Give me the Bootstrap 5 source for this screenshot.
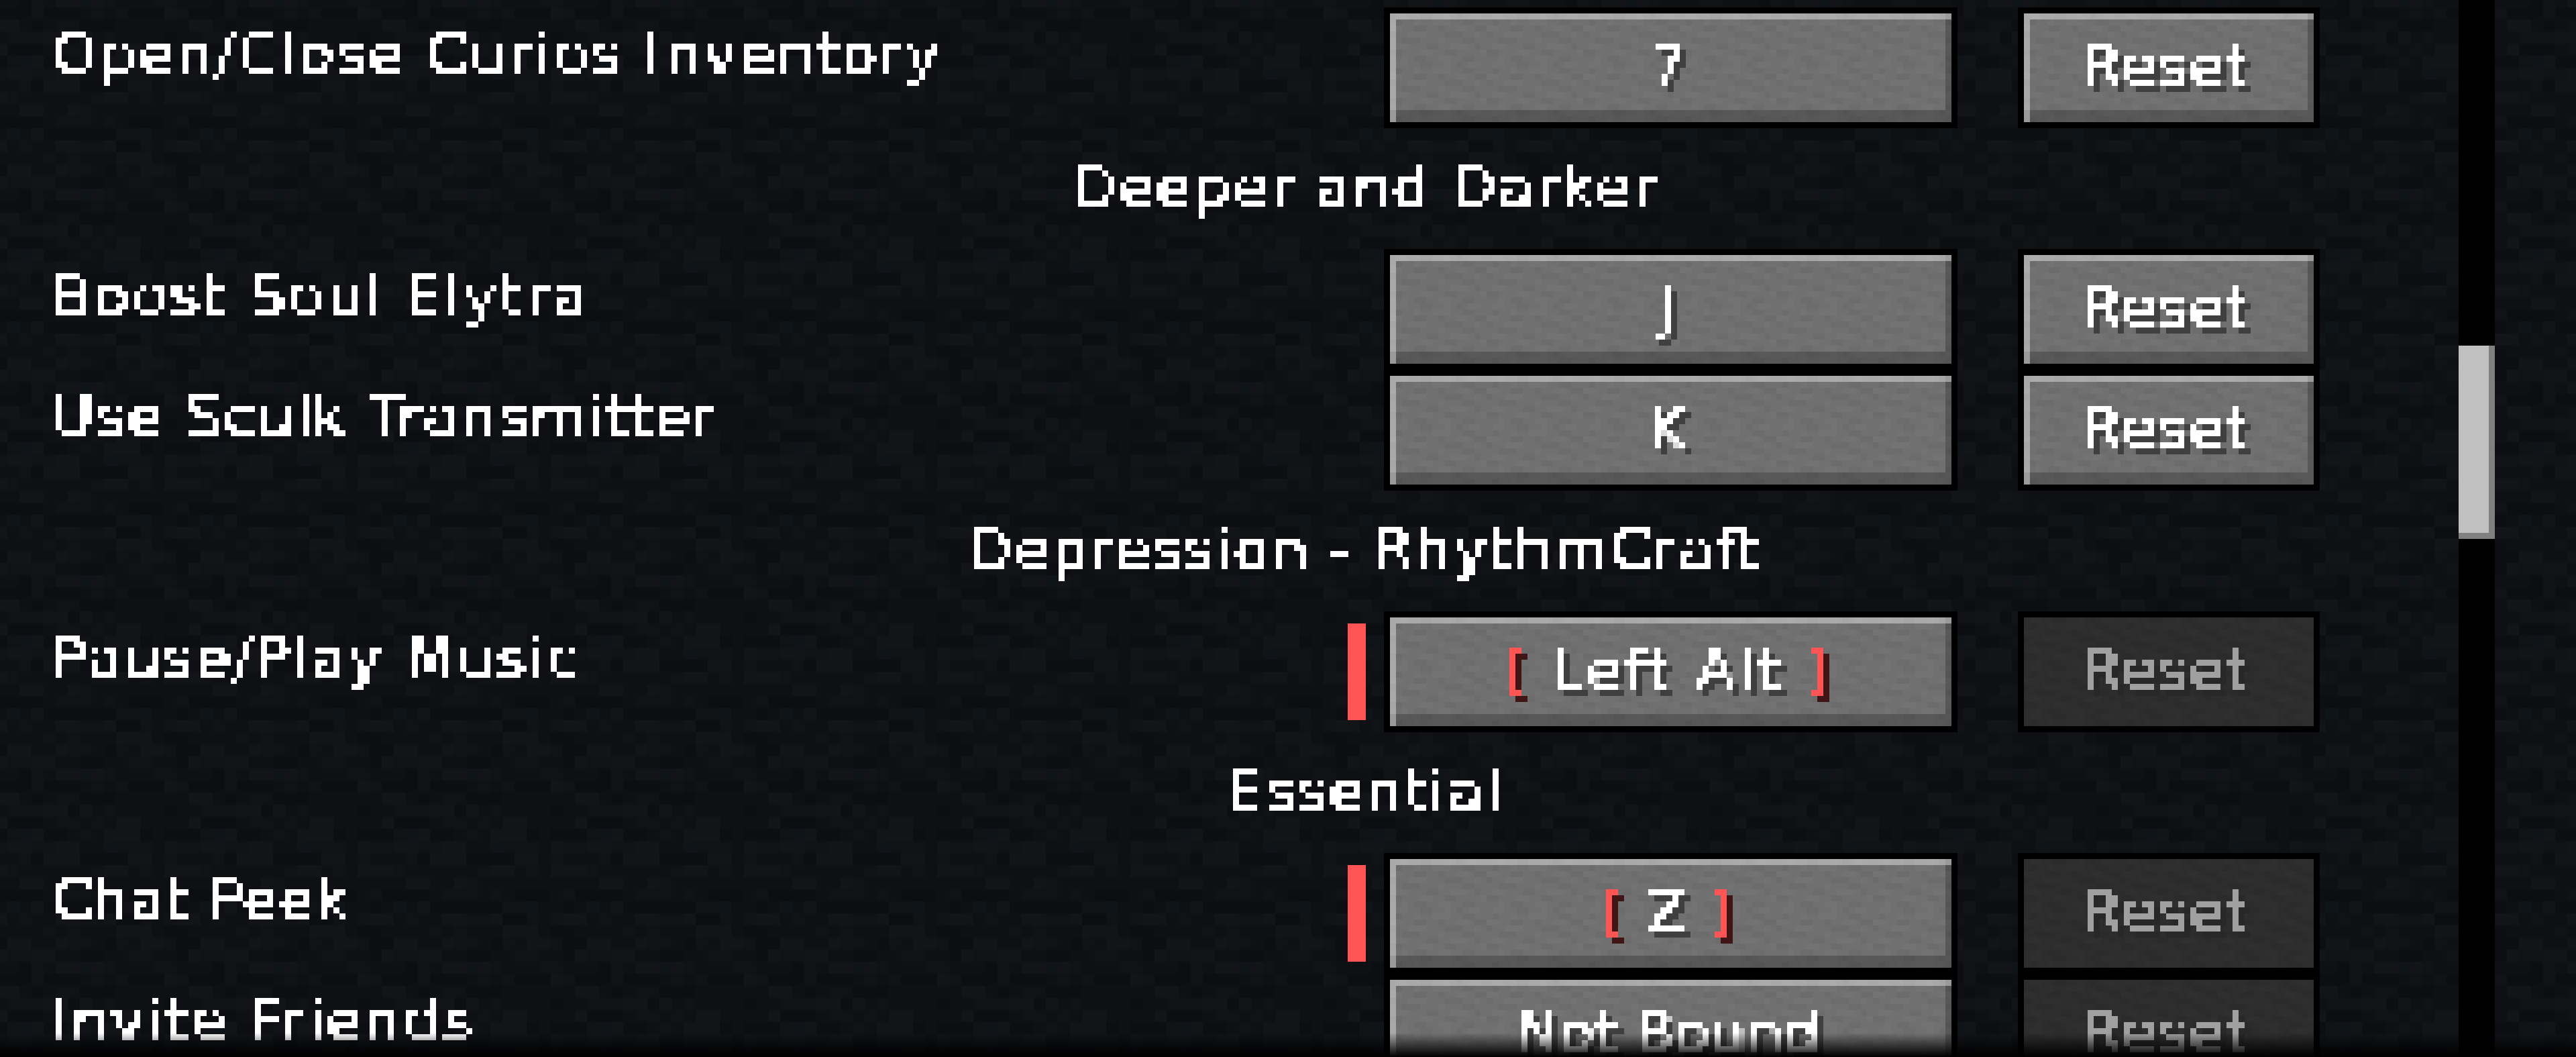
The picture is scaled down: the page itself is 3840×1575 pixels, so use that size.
<!doctype html>
<html lang="en">
<head>
<meta charset="utf-8">
<title>Key Binds</title>
<link href="https://cdn.jsdelivr.net/npm/bootstrap@5.3.0/dist/css/bootstrap.min.css" rel="stylesheet">
<style>
html,body{height:100%}
body{margin:0;overflow:hidden;color:#fff;background-color:#0e1014;
  background-image:url("data:image/svg+xml,%3Csvg xmlns='http://www.w3.org/2000/svg' width='288' height='288' viewBox='0 0 16 16' shape-rendering='crispEdges' fill='none'%3E%3Cpath stroke='%23121418' d='M1 .5h2M7 .5h2M11 .5h1M12 1.5h3M3 2.5h2M7 2.5h1M14 2.5h2M2 3.5h1M5 3.5h2M7 4.5h2M10 4.5h1M0 5.5h1M2 6.5h2M6 7.5h2M9 7.5h1M2 8.5h1M12 8.5h2M5 9.5h1M11 9.5h3M0 10.5h1M3 10.5h2M7 10.5h2M6 11.5h3M13 11.5h2M0 12.5h3M11 12.5h2M4 13.5h2M8 13.5h1M5 15.5h1'/%3E%3Cpath stroke='%23101216' d='M0 .5h1M4 .5h1M9 .5h2M14 .5h1M6 1.5h1M8 1.5h1M0 2.5h1M8 2.5h2M12 2.5h1M3 3.5h2M13 3.5h2M0 4.5h1M5 4.5h1M11 4.5h1M15 4.5h1M1 5.5h1M5 5.5h1M10 5.5h1M12 5.5h1M7 6.5h2M3 7.5h3M11 7.5h1M7 8.5h2M10 8.5h1M3 9.5h1M9 9.5h1M1 10.5h2M5 10.5h2M12 10.5h3M0 11.5h1M4 11.5h1M3 12.5h1M10 12.5h1M14 12.5h1M9 13.5h1M1 14.5h1M7 14.5h3M11 14.5h1M12 15.5h2'/%3E%3Cpath stroke='%230c0e12' d='M12 .5h2M0 1.5h2M1 2.5h2M11 2.5h1M1 3.5h1M9 3.5h2M4 4.5h1M2 5.5h3M6 5.5h3M13 5.5h3M5 6.5h1M9 6.5h3M0 7.5h1M8 7.5h1M3 8.5h3M0 9.5h3M6 9.5h2M14 9.5h1M5 11.5h1M9 11.5h4M2 14.5h4M13 14.5h3M1 15.5h1M6 15.5h6'/%3E%3Cpath stroke='%230f1418' d='M9 4.5h1M4 9.5h1M11 10.5h1M3 15.5h1M14 15.5h1'/%3E%3C/svg%3E");
  background-position:245px 209px;background-size:288px 288px;
  font-family:"DejaVu Sans",sans-serif}
.kb-screen{height:1575px}
.kb-list{width:3665px;padding-top:11px;flex:0 0 3665px}
.kb-row{height:180px}
.kb-label{flex:0 0 2009px;padding:36px 0 0 74px}
.kb-label .kb-text{padding-left:3px}
.kb-mark{flex:0 0 27px;height:144px;margin:18px 27px 0 0;background:#f55}
.kb-mark-off{visibility:hidden}
.btn.kb-btn,.btn.kb-btn:disabled{flex:0 0 855px;height:180px;border:9px solid #000;border-radius:0;padding:45px 0 0;
  display:flex;justify-content:center;align-items:flex-start;color:#fff;opacity:1;font:inherit;
  background-color:#707070;
  background-image:url("data:image/svg+xml,%3Csvg xmlns='http://www.w3.org/2000/svg' width='144' height='72' viewBox='0 0 16 8' shape-rendering='crispEdges' fill='none'%3E%3Cpath stroke='%23fff' stroke-opacity='.025' d='M1 .5h2M9 .5h1M13 .5h2M4 1.5h1M7 1.5h3M0 2.5h2M11 2.5h2M3 3.5h3M14 3.5h1M8 4.5h1M1 5.5h2M10 5.5h3M5 6.5h2M15 6.5h1M2 7.5h1M8 7.5h2'/%3E%3Cpath stroke='%23000' stroke-opacity='.035' d='M5 .5h2M11 .5h1M1 1.5h1M12 1.5h2M4 2.5h2M8 2.5h1M14 2.5h2M0 3.5h1M9 3.5h3M2 4.5h3M12 4.5h2M6 5.5h2M14 5.5h1M0 6.5h2M9 6.5h2M4 7.5h2M12 7.5h2'/%3E%3C/svg%3E");
  box-shadow:inset 9px 9px 0 rgba(255,255,255,.4),inset -9px -18px 0 rgba(0,0,0,.22)}
.btn.kb-btn:disabled{background-color:#2d2d2d;
  background-image:url("data:image/svg+xml,%3Csvg xmlns='http://www.w3.org/2000/svg' width='144' height='72' viewBox='0 0 16 8' shape-rendering='crispEdges' fill='none'%3E%3Cpath stroke='%23fff' stroke-opacity='.012' d='M1 .5h2M9 .5h1M13 .5h2M4 1.5h1M7 1.5h3M0 2.5h2M11 2.5h2M3 3.5h3M14 3.5h1M8 4.5h1M1 5.5h2M10 5.5h3M5 6.5h2M15 6.5h1M2 7.5h1M8 7.5h2'/%3E%3Cpath stroke='%23000' stroke-opacity='.05' d='M5 .5h2M11 .5h1M1 1.5h1M12 1.5h2M4 2.5h2M8 2.5h1M14 2.5h2M0 3.5h1M9 3.5h3M2 4.5h3M12 4.5h2M6 5.5h2M14 5.5h1M0 6.5h2M9 6.5h2M4 7.5h2M12 7.5h2'/%3E%3C/svg%3E");
  box-shadow:none;color:#a0a0a0}
.btn.kb-btn.kb-reset{flex:0 0 450px;margin-left:90px}
.kb-cat{height:180px;padding:54px 0 0 413px;text-align:center}
.kb-text{display:inline-block;font-size:86px;line-height:67px;padding:0 9px 27px 0;white-space:pre;color:inherit;filter:url(#kbPixel)}
.kb-shadow{text-shadow:9px 9px 0 #3f3f3f}
.kb-reset:disabled .kb-shadow{text-shadow:9px 9px 0 #282828}
.kb-red{color:#f55;text-shadow:9px 9px 0 #3f1515}
.trk-00{letter-spacing:0}
.trk-13{letter-spacing:1.3px}
.trk-20{letter-spacing:2px}
.trk-27{letter-spacing:2.7px}
.trk-29{letter-spacing:2.9px}
.trk-31{letter-spacing:3.1px}
.trk-35{letter-spacing:3.5px}
.trk-36{letter-spacing:3.6px}
.trk-38{letter-spacing:3.8px}
.trk-40{letter-spacing:4px}
.trk-42{letter-spacing:4.2px}
.trk-52{letter-spacing:5.2px}
.kb-track{flex:0 0 54px;height:1575px;background:#000}
.kb-thumb{margin-top:515px;height:288px;background:#c0c0c0;box-shadow:inset -9px -9px 0 #808080}
.kb-fade{left:0;right:0;bottom:0;height:36px;background:linear-gradient(rgba(0,0,0,0),#000);pointer-events:none}
.kb-defs{width:0;height:0}
</style>
</head>
<body>
<svg class="kb-defs position-absolute" aria-hidden="true">
  <filter id="kbPixel" x="0" y="0" width="100%" height="100%" color-interpolation-filters="sRGB">
    <feMorphology in="SourceGraphic" operator="dilate" radius="1 1" result="fat"/>
    <feFlood x="4" y="4" width="1" height="1" flood-color="#000"/>
    <feComposite width="9" height="9"/>
    <feTile result="grid"/>
    <feComposite in="fat" in2="grid" operator="in"/>
    <feComponentTransfer><feFuncA type="discrete" tableValues="0 0 0 1"/></feComponentTransfer>
    <feMorphology operator="dilate" radius="4"/>
  </filter>
</svg>
<main class="kb-screen d-flex position-relative">
  <div class="kb-list">
    <div class="kb-row d-flex">
      <div class="kb-label"><span class="kb-text trk-36">Open/Close Curios Inventory</span></div>
      <div class="kb-mark kb-mark-off"></div>
      <button class="btn kb-btn" type="button"><span class="kb-text kb-shadow">7</span></button>
      <button class="btn kb-btn kb-reset" type="button"><span class="kb-text kb-shadow trk-20">Reset</span></button>
    </div>
    <div class="kb-cat"><span class="kb-text trk-31">Deeper and Darker</span></div>
    <div class="kb-row d-flex">
      <div class="kb-label"><span class="kb-text trk-40">Boost Soul Elytra</span></div>
      <div class="kb-mark kb-mark-off"></div>
      <button class="btn kb-btn" type="button"><span class="kb-text kb-shadow">J</span></button>
      <button class="btn kb-btn kb-reset" type="button"><span class="kb-text kb-shadow trk-20">Reset</span></button>
    </div>
    <div class="kb-row d-flex">
      <div class="kb-label"><span class="kb-text trk-27">Use Sculk Transmitter</span></div>
      <div class="kb-mark kb-mark-off"></div>
      <button class="btn kb-btn" type="button"><span class="kb-text kb-shadow">K</span></button>
      <button class="btn kb-btn kb-reset" type="button"><span class="kb-text kb-shadow trk-20">Reset</span></button>
    </div>
    <div class="kb-cat"><span class="kb-text trk-29">Depression - RhythmCraft</span></div>
    <div class="kb-row d-flex">
      <div class="kb-label"><span class="kb-text trk-35">Pause/Play Music</span></div>
      <div class="kb-mark"></div>
      <button class="btn kb-btn" type="button"><span class="kb-text kb-shadow trk-52"><span class="kb-red">[ </span>Left Alt<span class="kb-red"> ]</span></span></button>
      <button class="btn kb-btn kb-reset" type="button" disabled><span class="kb-text kb-shadow trk-20">Reset</span></button>
    </div>
    <div class="kb-cat"><span class="kb-text trk-29">Essential</span></div>
    <div class="kb-row d-flex">
      <div class="kb-label"><span class="kb-text trk-13">Chat Peek</span></div>
      <div class="kb-mark"></div>
      <button class="btn kb-btn" type="button"><span class="kb-text kb-shadow trk-42"><span class="kb-red">[ </span>Z<span class="kb-red"> ]</span></span></button>
      <button class="btn kb-btn kb-reset" type="button" disabled><span class="kb-text kb-shadow trk-20">Reset</span></button>
    </div>
    <div class="kb-row d-flex">
      <div class="kb-label"><span class="kb-text trk-38">Invite Friends</span></div>
      <div class="kb-mark kb-mark-off"></div>
      <button class="btn kb-btn" type="button"><span class="kb-text kb-shadow trk-00">Not Bound</span></button>
      <button class="btn kb-btn kb-reset" type="button" disabled><span class="kb-text kb-shadow trk-20">Reset</span></button>
    </div>
  </div>
  <div class="kb-track"><div class="kb-thumb"></div></div>
  <div class="kb-fade position-absolute"></div>
</main>
<script src="https://cdn.jsdelivr.net/npm/bootstrap@5.3.0/dist/js/bootstrap.bundle.min.js"></script>
</body>
</html>
